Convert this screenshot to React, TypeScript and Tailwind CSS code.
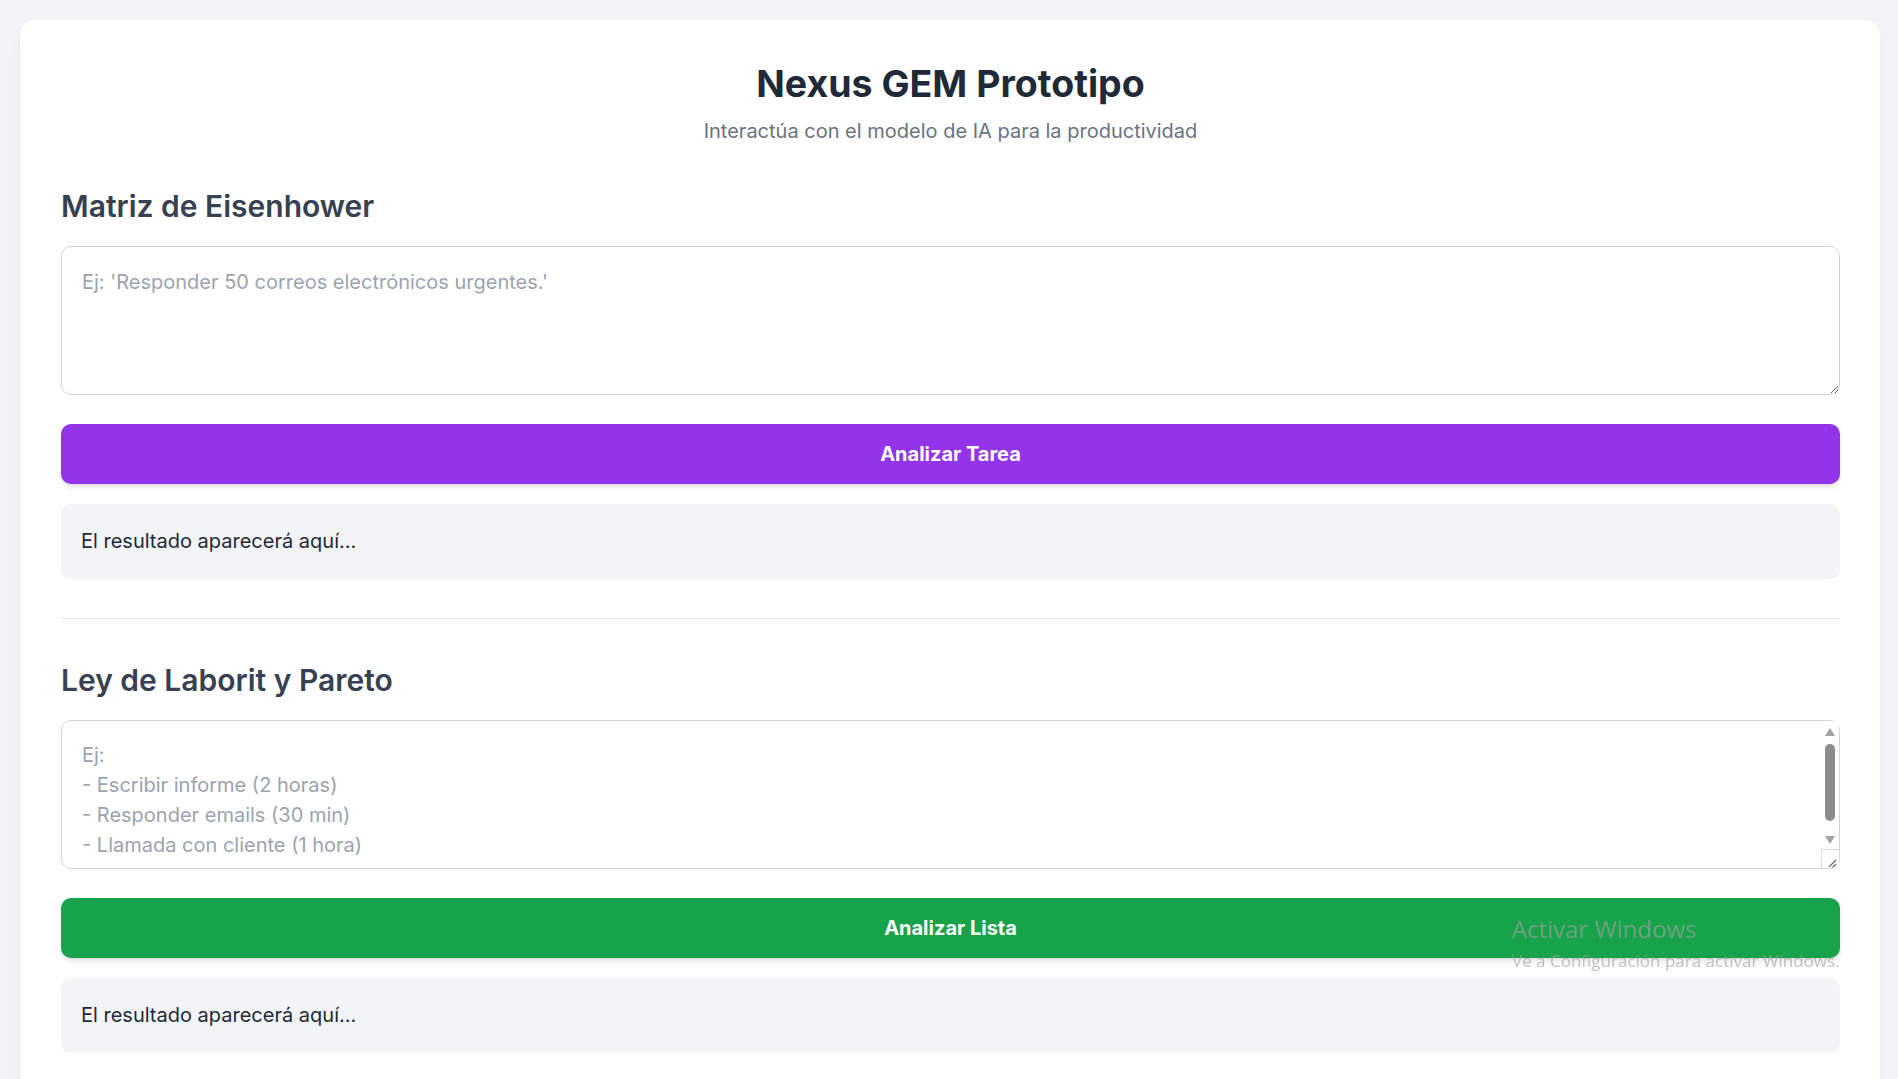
import React from "react";

function Scrollbar() {
  return (
    <svg
      className="absolute right-[1px] top-[1px] pointer-events-none"
      width="18"
      height="147"
      viewBox="0 0 18 147"
    >
      <rect x="0" y="0" width="18" height="147" fill="#ffffff" />
      <polygon points="4,15 14,15 9,7" fill="#a3a3a3" />
      <rect x="4" y="23" width="10" height="77" rx="5" fill="#8c8c8c" />
      <polygon points="4,115 14,115 9,123" fill="#a3a3a3" />
      <rect x="0.5" y="128.5" width="18" height="19" fill="#ffffff" stroke="#dcdcdc" strokeWidth="1" />
      <line x1="15" y1="139" x2="8" y2="146" stroke="#6b6b6b" strokeWidth="1.2" />
      <line x1="15" y1="143" x2="11.5" y2="146.5" stroke="#6b6b6b" strokeWidth="1.2" />
    </svg>
  );
}

function Section({
  title,
  placeholder,
  buttonLabel,
  buttonClass,
  scroll,
}: {
  title: string;
  placeholder: string;
  buttonLabel: string;
  buttonClass: string;
  scroll?: boolean;
}) {
  return (
    <section>
      <h2 className="text-[30px] leading-[40px] font-semibold text-[#374151] mb-[20px]">{title}</h2>
      <div className="relative">
        <textarea
          className={
            scroll
              ? "block w-full h-[149px] px-[20px] pt-[19px] pb-[20px] border border-[#d1d5db] rounded-[10px] text-[20px] leading-[30px] text-[#1f2937] placeholder:text-[#9ca3af] outline-none overflow-hidden [scrollbar-width:none]"
              : "block w-full h-[149px] px-[20px] pt-[20px] pb-[20px] border border-[#d1d5db] rounded-[10px] text-[20px] leading-[30px] text-[#1f2937] placeholder:text-[#9ca3af] outline-none"
          }
          placeholder={placeholder}
        />
        {scroll ? <Scrollbar /> : null}
      </div>
      <button
        className={
          "block w-full mt-[29px] py-[15px] text-white font-bold text-[20px] leading-[30px] rounded-[10px] shadow-[0_4px_6px_-1px_rgba(0,0,0,0.1),0_2px_4px_-2px_rgba(0,0,0,0.1)] " +
          buttonClass
        }
      >
        {buttonLabel}
      </button>
      <div className="mt-[20px] min-h-[75px] px-[20px] py-[22px] bg-[#f3f4f6] rounded-[10px] text-[20px] leading-[30px] text-[#1f2937]">
        El resultado aparecerá aquí...
      </div>
    </section>
  );
}

export default function App() {
  return (
    <div className="relative h-screen overflow-hidden bg-[#f3f4f6] pt-[20px] pl-[20px] pr-[18px] font-['Inter','Noto_Sans',sans-serif]">
      <div className="bg-white rounded-[15px] shadow-[0_10px_15px_-3px_rgba(0,0,0,0.08),0_4px_6px_-4px_rgba(0,0,0,0.08)] pt-[41px] pl-[41px] pr-[40px] pb-[40px]">
        <header className="text-center mb-[40px]">
          <h1 className="text-[37.5px] leading-[45px] font-bold text-[#1f2937] mb-[10px]">Nexus GEM Prototipo</h1>
          <p className="text-[20px] leading-[30px] text-[#6b7280]">Interactúa con el modelo de IA para la productividad</p>
        </header>

        <Section
          title="Matriz de Eisenhower"
          placeholder="Ej: 'Responder 50 correos electrónicos urgentes.'"
          buttonLabel="Analizar Tarea"
          buttonClass="bg-[#9333ea]"
        />

        <hr className="mt-[39px] mb-[41px] border-[#e5e7eb]" />

        <Section
          title="Ley de Laborit y Pareto"
          placeholder={"Ej:\n- Escribir informe (2 horas)\n- Responder emails (30 min)\n- Llamada con cliente (1 hora)"}
          buttonLabel="Analizar Lista"
          buttonClass="bg-[#16a34a]"
          scroll
        />
      </div>

      <div className="fixed left-[1512px] top-[913px] pointer-events-none font-['Open_Sans','Noto_Sans',sans-serif] text-[rgba(160,160,160,0.65)]">
        <div className="text-[24px] leading-[32px]">Activar Windows</div>
        <div className="mt-[5px] text-[17px] leading-[22px]">Ve a Configuración para activar Windows.</div>
      </div>
    </div>
  );
}
